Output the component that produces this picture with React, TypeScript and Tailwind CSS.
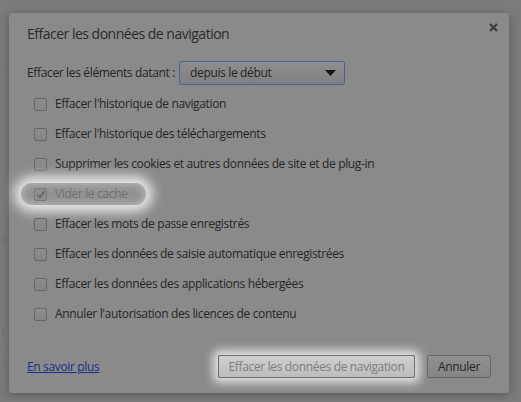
import React from "react";

const font = { fontFamily: '"Open Sans", "Noto Sans", Arial, sans-serif' };

const items: { label: string; checked?: boolean; spot?: boolean }[] = [
  { label: "Effacer l'historique de navigation" },
  { label: "Effacer l'historique des téléchargements" },
  { label: "Supprimer les cookies et autres données de site et de plug-in" },
  { label: "Vider le cache", checked: true, spot: true },
  { label: "Effacer les mots de passe enregistrés" },
  { label: "Effacer les données de saisie automatique enregistrées" },
  { label: "Effacer les données des applications hébergées" },
  { label: "Annuler l'autorisation des licences de contenu" },
];

function Box({ checked }: { checked?: boolean }) {
  return (
    <span
      className={
        "flex h-[13px] w-[13px] shrink-0 items-center justify-center rounded-[2px] border " +
        (checked
          ? "border-[#7a7a7a] bg-[#8e8e8e]"
          : "border-[#676767] bg-gradient-to-b from-[#8d8d8d] to-[#858585]")
      }
    >
      {checked && (
        <svg width="10" height="9" viewBox="0 0 10 9">
          <path d="M1.5 4.8 L3.8 7.3 L8.6 1.2" fill="none" stroke="#6a6a6a" strokeWidth="1.9" />
        </svg>
      )}
    </span>
  );
}

export default function App() {
  return (
    <div
      className="relative h-[402px] w-[521px] overflow-hidden bg-[#7b7b7b] tracking-[-0.35px]"
      style={font}
    >
      {/* page behind the modal overlay */}
      <div className="flex flex-col pt-[68px] text-[12px] text-[#737373]">
        <div className="ml-[-60px] h-[22px] w-[68px] border border-[#767676]" />
        <div className="ml-[-40px] mt-[140px] w-[49px] text-right">o</div>
        <div className="ml-[-40px] mt-[76px] w-[51px] text-right">t l</div>
        <div className="ml-[-40px] mt-[12px] w-[50px] text-right">h</div>
      </div>

      {/* dialog */}
      <div className="absolute left-[9px] top-[13px] flex h-[380px] w-[500px] flex-col rounded-[3px] bg-[#8a8a8a] px-[18px] shadow-[0_2px_10px_rgba(0,0,0,0.28)]">
        <button className="absolute right-[11px] top-[10px]">
          <svg width="9" height="9" viewBox="0 0 9 9">
            <path d="M1 1 L8 8 M8 1 L1 8" stroke="#3a3a3a" strokeWidth="2.1" />
          </svg>
        </button>

        <div className="mt-[11px] h-[20px] text-[14px] leading-[20px] tracking-[-0.5px] text-[#2a2a2a]">
          Effacer les données de navigation
        </div>

        <div className="mt-[17px] flex h-[24px] items-center text-[12px] text-[#242424]">
          <span>Effacer les éléments datant :</span>
          <div className="ml-[4px] flex h-[24px] w-[166px] items-center justify-between rounded-[2px] border border-[#4c6596] bg-gradient-to-b from-[#8e8e8e] to-[#808080] pl-[10px] pr-[8px]">
            <span>depuis le début</span>
            <svg width="11" height="6" viewBox="0 0 11 6">
              <path d="M0 0 H11 L5.5 6 Z" fill="#151515" />
            </svg>
          </div>
        </div>

        <div className="mt-[4px] flex flex-col">
          {items.map((it) => (
            <div key={it.label} className="flex h-[30px] items-center">
              <div
                className={
                  "flex h-[22px] items-center gap-[8px] pl-[7px] " +
                  (it.spot
                    ? "ml-[-6px] rounded-full bg-[#939393] pl-[13px] pr-[18px] shadow-[0_0_12px_7px_rgba(255,255,255,0.8),inset_0_0_6px_2px_rgba(255,255,255,0.3)]"
                    : "")
                }
              >
                <Box checked={it.checked} />
                <span
                  className={
                    "text-[12px] " + (it.spot ? "text-[#707070]" : "text-[#262626]")
                  }
                >
                  {it.label}
                </span>
              </div>
            </div>
          ))}
        </div>

        <div className="mt-auto mb-[15px] flex items-center">
          <a className="text-[12px] text-[#1c2d8c] underline">En savoir plus</a>
          <div className="ml-auto flex items-center gap-[12px]">
            <button className="h-[23px] w-[197px] whitespace-nowrap rounded-[2px] border border-[#6e6e6e] bg-gradient-to-b from-[#cfcfcf] to-[#bdbdbd] text-[12px] text-[#7e7e7e] shadow-[0_0_10px_5px_rgba(255,255,255,0.75)]">
              Effacer les données de navigation
            </button>
            <button className="h-[23px] w-[64px] rounded-[2px] border border-[#686868] bg-gradient-to-b from-[#8f8f8f] to-[#858585] text-[12px] text-[#262626]">
              Annuler
            </button>
          </div>
        </div>
      </div>
    </div>
  );
}
